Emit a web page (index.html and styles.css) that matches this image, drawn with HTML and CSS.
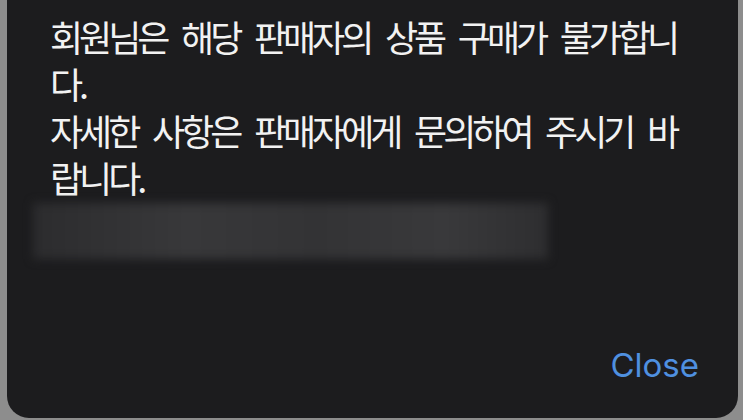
FILE: index.html
```html
<!DOCTYPE html>
<html lang="ko">
<head>
  <meta charset="UTF-8">
  <meta name="viewport" content="width=device-width, initial-scale=1.0">
  <title>알림</title>
  <link rel="stylesheet" href="styles.css">
</head>
<body>
  <div class="dialog">
    <p class="message">회원님은 해당 판매자의 상품 구매가 불가합니다.<br>자세한 사항은 판매자에게 문의하여 주시기 바랍니다.</p>
    <!-- seller info, blurred out -->
    <div class="redacted"></div>
    <div class="actions">
      <button type="button" class="close-btn">Close</button>
    </div>
  </div>
</body>
</html>
```

FILE: styles.css
```css
body {
  margin: 0;
  padding: 0;
  background-color: #8d8d8d;
  font-family: "Noto Sans CJK KR", "Noto Sans", sans-serif;
  overflow: hidden;
}

.dialog {
  display: flex;
  flex-direction: column;
  height: 418px;
  margin: 0 5px 2px 7px;
  background-color: #1c1c1e;
  border-radius: 0 0 22px 22px;
  overflow: hidden;
}

.message {
  margin: 0;
  padding: 13px 42px 0 43px;
  color: #f2f2f2;
  font-size: 36px;
  line-height: 47px;
  letter-spacing: -4px;
  word-spacing: 8.5px;
}

.redacted {
  height: 56px;
  margin: 2px 190px 0 26px;
  background: linear-gradient(90deg, #2c2c2e 0%, #38383a 30%, #333335 55%, #39393b 80%, #2e2e30 100%);
  filter: blur(5px);
}

.actions {
  display: flex;
  justify-content: flex-end;
  margin-top: auto;
  padding: 0 39px 33px;
}

.close-btn {
  padding: 0;
  border: none;
  background: none;
  color: #4f90e0;
  font-family: Inter, "Liberation Sans", sans-serif;
  font-size: 33px;
  line-height: 40px;
  cursor: pointer;
}
```
